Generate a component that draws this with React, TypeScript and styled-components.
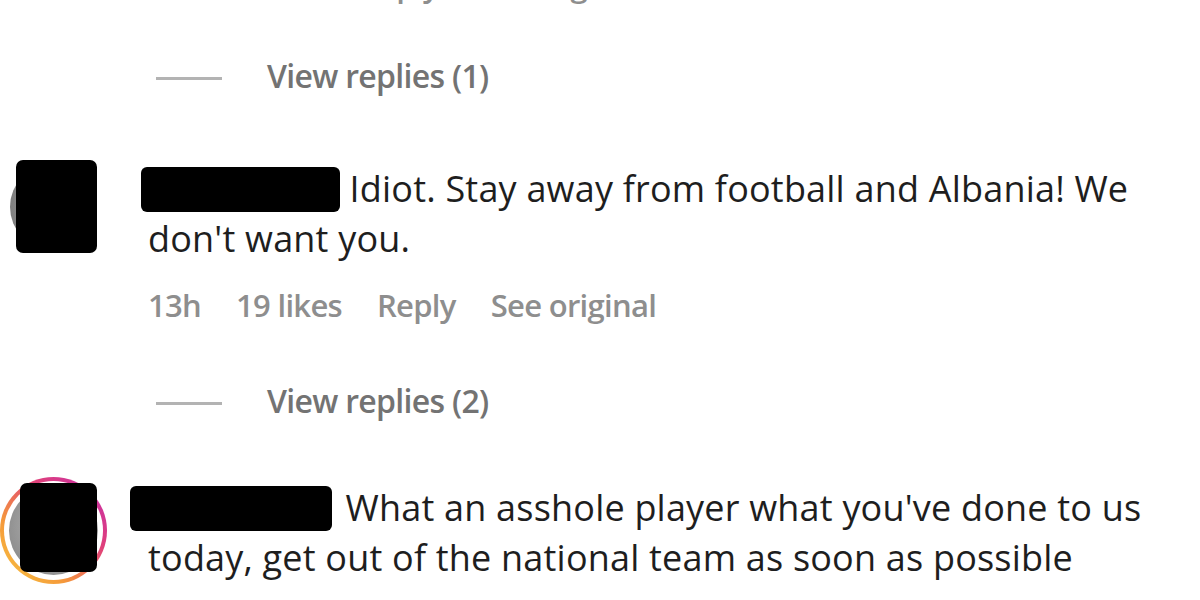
import React from "react";
import styled, { createGlobalStyle } from "styled-components";

const Global = createGlobalStyle`
  html, body { margin: 0; padding: 0; background: #fff; }
  body {
    width: 1200px;
    height: 600px;
    overflow: hidden;
    font-family: "Open Sans", "Noto Sans", sans-serif;
  }
`;

const Page = styled.div`
  width: 1200px;
  height: 600px;
  overflow: hidden;
  background: #fff;
  display: flex;
  flex-direction: column;
`;

const MetaRow = styled.div<{ $mt: number }>`
  display: flex;
  gap: 35px;
  padding-left: 148px;
  margin-top: ${(p) => p.$mt}px;
  height: 40px;
  line-height: 40px;
  font-size: 31px;
  letter-spacing: -0.7px;
  font-weight: 600;
  color: #8e8e8e;
  white-space: nowrap;
  flex-shrink: 0;
`;

const ViewReplies = styled.div<{ $mt: number }>`
  display: flex;
  align-items: center;
  gap: 45px;
  padding-left: 156px;
  margin-top: ${(p) => p.$mt}px;
  height: 40px;
  line-height: 40px;
  font-size: 32px;
  letter-spacing: -0.7px;
  font-weight: 600;
  color: #737373;
  white-space: nowrap;
  flex-shrink: 0;
`;

const Dash = styled.span`
  width: 66px;
  height: 3px;
  background: #b3b3b3;
  margin-top: 4px;
`;

const CommentRow = styled.div<{ $mt: number }>`
  display: flex;
  align-items: flex-start;
  margin-top: ${(p) => p.$mt}px;
  flex-shrink: 0;
`;

const AvatarSlot = styled.div`
  width: 148px;
  flex-shrink: 0;
`;

const AvatarDisc = styled.div<{ $x: number; $y: number; $size: number; $ring?: boolean }>`
  position: relative;
  margin-left: ${(p) => p.$x}px;
  margin-top: ${(p) => p.$y}px;
  width: ${(p) => p.$size}px;
  height: ${(p) => p.$size}px;
  border-radius: 50%;
  box-sizing: border-box;
  padding: ${(p) => (p.$ring ? 4 : 0)}px;
  background: ${(p) =>
    p.$ring
      ? "linear-gradient(45deg, #f7c843 0%, #f59a3a 30%, #e0407a 65%, #c22bb0 100%)"
      : "radial-gradient(circle at 60% 50%, #b4b4b4, #6f6f6f)"};
`;

const RingGap = styled.div`
  width: 100%;
  height: 100%;
  border-radius: 50%;
  background: #fff;
  padding: 5px;
  box-sizing: border-box;
`;

const GrayFace = styled.div`
  width: 100%;
  height: 100%;
  border-radius: 50%;
  background: radial-gradient(circle at 55% 45%, #c0c0c0, #7e7e7e);
`;

const AvatarCover = styled.div<{ $l: number; $t: number; $w: number; $h: number }>`
  position: absolute;
  left: ${(p) => p.$l}px;
  top: ${(p) => p.$t}px;
  width: ${(p) => p.$w}px;
  height: ${(p) => p.$h}px;
  background: #000;
  border-radius: 7px;
`;

const Body = styled.div`
  font-size: 36px;
  letter-spacing: 0.2px;
  line-height: 50px;
  color: #1e1e1e;
  white-space: nowrap;
`;

const NameCover = styled.span<{ $w: number; $ml: number; $mr: number }>`
  display: inline-block;
  width: ${(p) => p.$w}px;
  height: 45px;
  margin-left: ${(p) => p.$ml}px;
  margin-right: ${(p) => p.$mr}px;
  vertical-align: -10px;
  background: #000;
  border-radius: 6px;
`;

const Meta = ({ mt, items }: { mt: number; items: string[] }) => (
  <MetaRow $mt={mt}>
    {items.map((t) => (
      <span key={t}>{t}</span>
    ))}
  </MetaRow>
);

export default function App() {
  return (
    <>
      <Global />
      <Page>
        <Meta mt={-35} items={["12h", "4 likes", "Reply", "See original"]} />
        <ViewReplies $mt={51}>
          <Dash />
          <span>View replies (1)</span>
        </ViewReplies>

        <CommentRow $mt={68}>
          <AvatarSlot>
            <AvatarDisc $x={10} $y={0} $size={86}>
              <AvatarCover $l={6} $t={-4} $w={81} $h={93} />
            </AvatarDisc>
          </AvatarSlot>
          <Body>
            <NameCover $w={199} $ml={-7} $mr={0} /> Idiot. Stay away from football and Albania! We
            <br />
            don't want you.
          </Body>
        </CommentRow>
        <Meta mt={21} items={["13h", "19 likes", "Reply", "See original"]} />
        <ViewReplies $mt={56}>
          <Dash />
          <span>View replies (2)</span>
        </ViewReplies>

        <CommentRow $mt={62}>
          <AvatarSlot>
            <AvatarDisc $x={0} $y={-6} $size={107} $ring>
              <RingGap>
                <GrayFace />
              </RingGap>
              <AvatarCover $l={20} $t={6} $w={77} $h={89} />
            </AvatarDisc>
          </AvatarSlot>
          <Body>
            <NameCover $w={202} $ml={-18} $mr={4} /> What an asshole player what you've done to us
            <br />
            today, get out of the national team as soon as possible
          </Body>
        </CommentRow>
      </Page>
    </>
  );
}
